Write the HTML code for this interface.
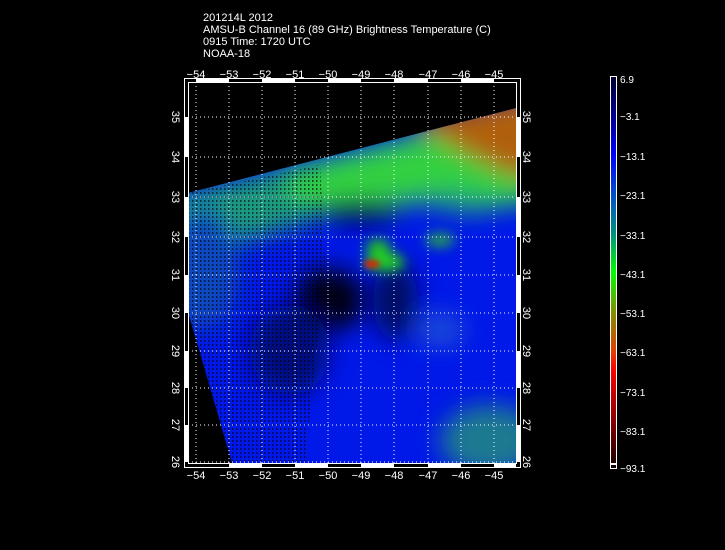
<!DOCTYPE html>
<html><head><style>
html,body{margin:0;padding:0;background:#000;width:725px;height:550px;overflow:hidden}
svg{display:block}
text{font-family:"Liberation Sans",sans-serif;fill:#fff}
</style></head><body>
<svg width="725" height="550" viewBox="0 0 725 550" xmlns="http://www.w3.org/2000/svg">
<defs>
<clipPath id="sw"><polygon points="188,193 516,108 516,463 232,463 188,312"/></clipPath>
<filter id="b6" filterUnits="userSpaceOnUse" x="0" y="0" width="725" height="550"><feGaussianBlur stdDeviation="6"/></filter>
<filter id="b12" filterUnits="userSpaceOnUse" x="0" y="0" width="725" height="550"><feGaussianBlur stdDeviation="12"/></filter>
<filter id="b3" filterUnits="userSpaceOnUse" x="0" y="0" width="725" height="550"><feGaussianBlur stdDeviation="3"/></filter>
<linearGradient id="cb" x1="0" y1="0" x2="0" y2="1">
<stop offset="0" stop-color="#000030"/><stop offset="0.1" stop-color="#000090"/>
<stop offset="0.2" stop-color="#0000ff"/><stop offset="0.3" stop-color="#0050c8"/>
<stop offset="0.4" stop-color="#009080"/><stop offset="0.5" stop-color="#00ff00"/>
<stop offset="0.6" stop-color="#809000"/><stop offset="0.7" stop-color="#e04000"/>
<stop offset="0.75" stop-color="#ff0000"/><stop offset="0.87" stop-color="#900000"/>
<stop offset="1" stop-color="#100000"/></linearGradient>
<pattern id="dots" width="4" height="4" patternUnits="userSpaceOnUse"><rect width="1.5" height="2" fill="#000"/></pattern>
</defs>
<text x="203" y="21" font-size="11">201214L 2012</text>
<text x="203" y="33" font-size="11">AMSU-B Channel 16 (89 GHz) Brightness Temperature (C)</text>
<text x="203" y="45" font-size="11">0915 Time: 1720 UTC</text>
<text x="203" y="57" font-size="11">NOAA-18</text>
<g clip-path="url(#sw)">
<rect x="188" y="82" width="328" height="381" fill="#0018e8"/>
<g filter="url(#b12)">
<polygon points="100,215 600,85 600,190 470,215 420,205 330,215 250,240 100,260" fill="#1a9a80"/>
<polygon points="280,175 600,95 600,200 500,200 450,190 380,200 300,205" fill="#30d040"/>
<polygon points="410,120 600,80 600,180 510,175 460,150" fill="#b06010"/>
<ellipse cx="200" cy="270" rx="40" ry="60" fill="#0a4ac0"/>
<ellipse cx="330" cy="300" rx="35" ry="32" fill="#000018"/>
<ellipse cx="395" cy="300" rx="22" ry="40" fill="#000a60"/>
<ellipse cx="490" cy="440" rx="50" ry="35" fill="#1a7a90"/>
<ellipse cx="440" cy="330" rx="25" ry="18" fill="#1a4ad8"/>
<ellipse cx="290" cy="350" rx="40" ry="45" fill="#000a80"/>
<ellipse cx="360" cy="212" rx="40" ry="12" fill="#000050"/>
</g>
<g filter="url(#b6)">
<ellipse cx="378" cy="248" rx="12" ry="9" fill="#20c020"/>
<ellipse cx="385" cy="262" rx="20" ry="9" fill="#20d020"/>
<ellipse cx="440" cy="240" rx="15" ry="7" fill="#20a050"/>
</g>
<g filter="url(#b3)">
<ellipse cx="372" cy="264" rx="8" ry="4" fill="#e02000"/>
</g>
<polygon points="188,193 320,165 325,260 305,463 232,463 188,312" fill="url(#dots)" opacity="0.6"/>
</g>
<g stroke="#fff" stroke-width="1" stroke-dasharray="1,3" fill="none">
<path d="M196,82V463M229,82V463M262,82V463M295,82V463M328,82V463M361,82V463M394,82V463M428,82V463M461,82V463M494,82V463"/>
<path d="M188,117H516M188,157H516M188,197H516M188,237H516M188,275H516M188,313H516M188,351H516M188,388H516M188,425H516M188,462H516"/>
</g>
<g fill="none" stroke="#fff">
<rect x="184.5" y="78.5" width="336" height="389"/>
<rect x="188.5" y="82.5" width="328" height="381"/>
</g>
<g fill="#fff">
<rect x="196" y="79" width="33" height="3"/><rect x="262" y="79" width="33" height="3"/><rect x="328" y="79" width="33" height="3"/><rect x="394" y="79" width="34" height="3"/><rect x="461" y="79" width="33" height="3"/>
<rect x="229" y="464" width="33" height="3"/><rect x="295" y="464" width="33" height="3"/><rect x="361" y="464" width="33" height="3"/><rect x="428" y="464" width="33" height="3"/><rect x="494" y="464" width="22" height="3"/>
<rect x="185" y="117" width="3" height="40"/><rect x="185" y="197" width="3" height="40"/><rect x="185" y="275" width="3" height="38"/><rect x="185" y="351" width="3" height="37"/><rect x="185" y="425" width="3" height="37"/>
<rect x="517" y="117" width="3" height="40"/><rect x="517" y="197" width="3" height="40"/><rect x="517" y="275" width="3" height="38"/><rect x="517" y="351" width="3" height="37"/><rect x="517" y="425" width="3" height="37"/>
</g>
<g font-size="11" text-anchor="middle">
<text x="196" y="78">−54</text><text x="229" y="78">−53</text><text x="262" y="78">−52</text><text x="295" y="78">−51</text><text x="328" y="78">−50</text><text x="361" y="78">−49</text><text x="394" y="78">−48</text><text x="428" y="78">−47</text><text x="461" y="78">−46</text><text x="494" y="78">−45</text>
<text x="196" y="479">−54</text><text x="229" y="479">−53</text><text x="262" y="479">−52</text><text x="295" y="479">−51</text><text x="328" y="479">−50</text><text x="361" y="479">−49</text><text x="394" y="479">−48</text><text x="428" y="479">−47</text><text x="461" y="479">−46</text><text x="494" y="479">−45</text>
</g>
<g font-size="11" text-anchor="middle">
<text transform="translate(172,117) rotate(90)">35</text><text transform="translate(172,157) rotate(90)">34</text><text transform="translate(172,197) rotate(90)">33</text><text transform="translate(172,237) rotate(90)">32</text><text transform="translate(172,275) rotate(90)">31</text><text transform="translate(172,313) rotate(90)">30</text><text transform="translate(172,351) rotate(90)">29</text><text transform="translate(172,388) rotate(90)">28</text><text transform="translate(172,425) rotate(90)">27</text><text transform="translate(172,462) rotate(90)">26</text>
<text transform="translate(523,117) rotate(90)">35</text><text transform="translate(523,157) rotate(90)">34</text><text transform="translate(523,197) rotate(90)">33</text><text transform="translate(523,237) rotate(90)">32</text><text transform="translate(523,275) rotate(90)">31</text><text transform="translate(523,313) rotate(90)">30</text><text transform="translate(523,351) rotate(90)">29</text><text transform="translate(523,388) rotate(90)">28</text><text transform="translate(523,425) rotate(90)">27</text><text transform="translate(523,462) rotate(90)">26</text>
</g>
<rect x="610.5" y="76.5" width="6" height="392" fill="url(#cb)" stroke="#fff"/>
<rect x="610" y="463" width="7" height="2" fill="#fff"/>
<g font-size="10">
<text x="620" y="83">6.9</text><text x="620" y="120">−3.1</text><text x="620" y="160">−13.1</text><text x="620" y="199">−23.1</text><text x="620" y="239">−33.1</text><text x="620" y="278">−43.1</text><text x="620" y="317">−53.1</text><text x="620" y="356">−63.1</text><text x="620" y="396">−73.1</text><text x="620" y="435">−83.1</text><text x="620" y="472">−93.1</text>
</g>
</svg>
</body></html>
